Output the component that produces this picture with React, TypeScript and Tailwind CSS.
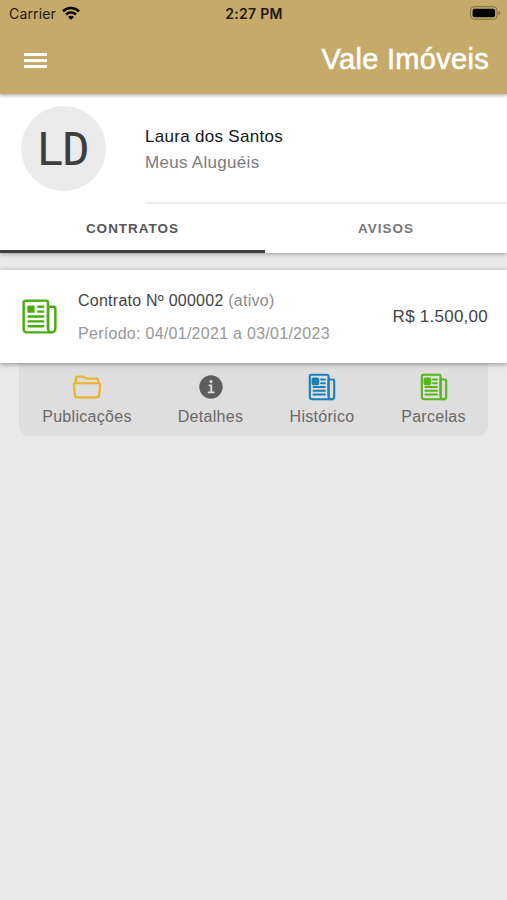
import type { IconType } from "react-icons";
import { IoFolderOpenOutline, IoInformationCircle, IoNewspaperOutline } from "react-icons/io5";

interface Action {
  label: string;
  icon: IconType;
  iconCls: string;
  cls: string;
}

const ACTIONS: Action[] = [
  { label: "Publicações", icon: IoFolderOpenOutline, iconCls: "text-[#eeb12c] [&_path]:[stroke-width:38px]", cls: "w-[136px]" },
  { label: "Detalhes", icon: IoInformationCircle, iconCls: "text-[#5e5e5e]", cls: "w-[111px]" },
  { label: "Histórico", icon: IoNewspaperOutline, iconCls: "text-[#1c7fb5] [&_path]:[stroke-width:36px]", cls: "w-[112px]" },
  { label: "Parcelas", icon: IoNewspaperOutline, iconCls: "text-[#56b61a] [&_path]:[stroke-width:36px]", cls: "w-[111px]" },
];

function StatusBar() {
  return (
    <div className="grid h-7 grid-cols-3 items-center pl-[9px] pr-[6px] font-['Inter',sans-serif] text-[14px] text-[#1d180e]">
      <div className="flex items-center gap-[6px]">
        <span className="-translate-y-px tracking-[0.15px]">Carrier</span>
        <svg viewBox="0 0 18 14" className="h-[14px] w-[18px] -translate-y-px text-black" fill="none" stroke="currentColor" strokeWidth="2.5">
          <path d="M1 5.3C5.6.9 12.4.9 17 5.3" />
          <path d="M4 8.5c2.9-2.7 7.1-2.7 10 0" />
          <path d="M9 13.8 6 10.9c1.7-1.5 4.3-1.5 6 0z" fill="currentColor" stroke="none" />
        </svg>
      </div>
      <span className="-translate-x-[1px] -translate-y-px whitespace-nowrap text-center text-[14px] font-semibold tracking-[0.3px]">2:27 PM</span>
      <svg viewBox="0 0 31 14" className="h-[14px] w-[31px] -translate-y-px justify-self-end">
        <rect x="0.6" y="0.7" width="26.5" height="12.6" rx="3.6" fill="none" stroke="#7d6c45" strokeWidth="1" />
        <rect x="2.6" y="2.7" width="22.5" height="8.6" rx="2" fill="#000" />
        <path d="M28.6 5v4c.9-.3 1.5-1.1 1.5-2s-.6-1.7-1.5-2z" fill="#7d6c45" />
      </svg>
    </div>
  );
}

function Header() {
  return (
    <header className="relative z-10 h-[94px] bg-[#c6aa6a] shadow-[0_1px_4px_rgba(0,0,0,0.4)]">
      <StatusBar />
      <div className="flex h-[64px] items-center justify-between pl-6 pr-[18px]">
        <button aria-label="Menu" className="flex w-[23px] flex-col gap-[3px]">
          <span className="h-[3px] bg-white" />
          <span className="h-[3px] bg-white" />
          <span className="h-[3px] bg-white" />
        </button>
        <h1 className="-translate-y-px text-[29px] leading-8 tracking-[0.3px] text-white [-webkit-text-stroke:0.6px_white]">Vale Imóveis</h1>
      </div>
    </header>
  );
}

function Profile() {
  return (
    <section className="flex h-[110px] pl-[21px]">
      <div className="mt-[12px] flex size-[85px] shrink-0 items-center justify-center rounded-full bg-[#ebebeb] pr-[2px] pt-[2px] font-['DejaVu_Sans_Mono',monospace] text-[45px] leading-none tracking-[-1px] text-[#3e3e3e]">
        LD
      </div>
      <div className="ml-[39px] flex-1 border-b-2 border-[#ebebeb] pt-[30px]">
        <p className="text-[17px] leading-[26px] tracking-[0.3px] text-[#161616]">Laura dos Santos</p>
        <p className="text-[17px] leading-[26px] tracking-[0.3px] text-[#7c7c7c]">Meus Aluguéis</p>
      </div>
    </section>
  );
}

function Tabs() {
  return (
    <nav className="flex h-[49px] text-[13.5px] font-bold tracking-[1px]">
      <button className="w-[265px] border-b-[3px] border-[#3f3f3f] pt-[4px] text-[#555]">CONTRATOS</button>
      <button className="flex-1 border-b-[3px] border-transparent pt-[4px] text-[#777]">AVISOS</button>
    </nav>
  );
}

export default function App() {
  return (
    <div className="h-[900px] w-[507px] overflow-hidden bg-[#e9e9e9] font-['Liberation_Sans',Arial,sans-serif]">
      <Header />
      <div className="bg-white shadow-[0_1px_4px_rgba(0,0,0,0.35)]">
        <Profile />
        <Tabs />
      </div>

      <main className="mt-[17px]">
        <div className="relative z-10 flex h-[93px] items-center bg-white pl-5 pr-[19px] shadow-[0_1px_5px_rgba(0,0,0,0.4)]">
          <IoNewspaperOutline className="size-[39px] text-[#49ad0b]" />
          <div className="ml-[19px] flex-1 whitespace-nowrap">
            <p className="text-[16px] leading-[33px] tracking-[0.25px] text-[#444]">
              Contrato Nº 000002 <span className="text-[#8b8b8b]">(ativo)</span>
            </p>
            <p className="text-[16px] leading-[33px] tracking-[0.28px] text-[#979797]">Período: 04/01/2021 a 03/01/2023</p>
          </div>
          <span className="text-[17px] tracking-[0.25px] text-[#444]">R$ 1.500,00</span>
        </div>

        <div className="mx-[19px] flex h-[73px] rounded-b-[10px] bg-[#dedede]">
          {ACTIONS.map(({ label, icon: Icon, iconCls, cls }) => (
            <button key={label} className={`flex shrink-0 flex-col items-center pt-[9px] ${cls}`}>
              <Icon className={`size-[30px] ${iconCls}`} />
              <span className="mt-[3px] text-[16px] leading-6 tracking-[0.3px] text-[#696969]">{label}</span>
            </button>
          ))}
        </div>
      </main>
    </div>
  );
}
